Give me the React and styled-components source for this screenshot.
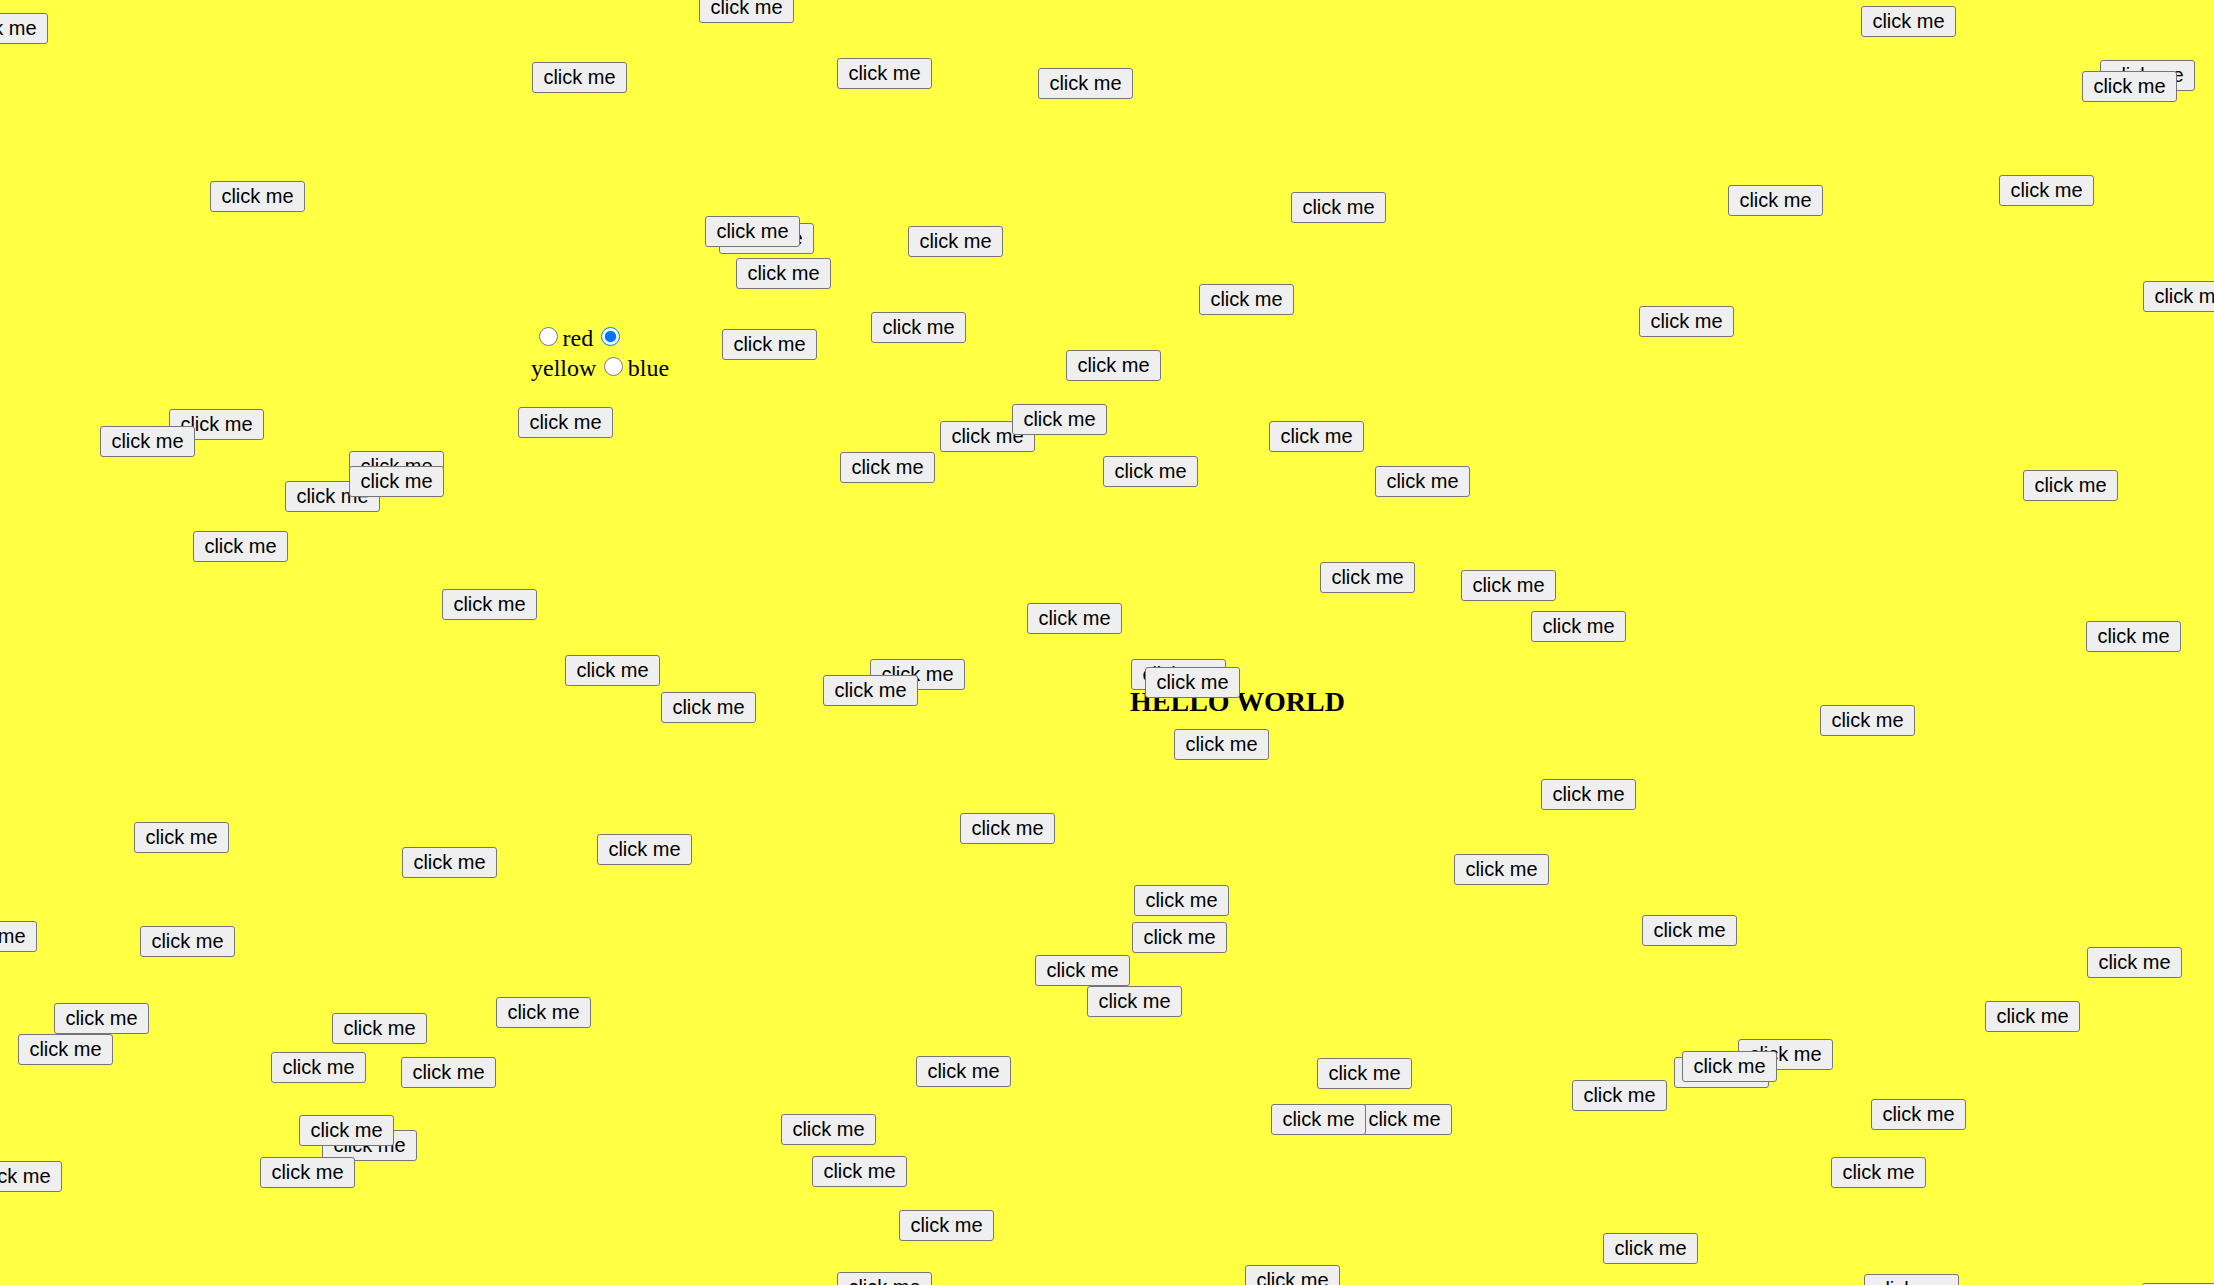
import React from 'react'
import styled, {createGlobalStyle} from 'styled-components'

// where each button landed on the page (left, top)
const spots = [
    [-47, 13], [699, -8], [532, 62], [837, 58], [1038, 68], [1861, 6],
    [2100, 60], [2082, 71], [210, 181], [1999, 175], [1728, 185], [1291, 192],
    [719, 223], [705, 216], [736, 258], [908, 226], [1199, 284], [1639, 306],
    [2143, 281], [871, 312], [722, 329], [1066, 350], [518, 407],
    [169, 409], [100, 426], [349, 451], [285, 481], [349, 466], [193, 531],
    [840, 452], [940, 421], [1012, 404], [1103, 456], [1269, 421], [1375, 466],
    [2023, 470], [442, 589], [1320, 562], [1461, 570], [1531, 611], [1027, 603],
    [2086, 621], [565, 655], [661, 692], [870, 659], [823, 675],
    [1131, 659], [1145, 667], [1174, 729], [1820, 705], [1541, 779],
    [134, 822], [402, 847], [597, 834], [960, 813], [1454, 854],
    [-58, 921], [140, 926], [1134, 885], [1132, 922], [1642, 915],
    [1035, 955], [1087, 986], [2087, 947], [54, 1003], [18, 1034],
    [332, 1013], [496, 997], [1985, 1001], [271, 1052], [401, 1057],
    [916, 1056], [1317, 1058], [1738, 1039], [1674, 1057], [1682, 1051],
    [1572, 1080], [1871, 1099], [1357, 1104], [1271, 1104],
    [322, 1130], [299, 1115], [260, 1157], [781, 1114], [812, 1156],
    [-33, 1161], [1831, 1157], [899, 1210], [1603, 1233], [837, 1272],
    [1245, 1265], [1864, 1274], [2142, 1283],
]

const colors = ['red', 'yellow', 'blue']

const GlobalStyle = createGlobalStyle`
    html, body {
        margin: 0;
        background: #ffff44;
    }
`

const Canvas = styled.div`
    position: relative;
    width: 100vw;
    height: 100vh;
    overflow: hidden;
    background: #ffff44;
    font-family: "Liberation Serif", "Times New Roman", serif;
    color: #000;
`

const Heading = styled.h3`
    position: absolute;
    left: 1130px;
    top: 686px;
    margin: 0;
    font-size: 28px;
    font-weight: bold;
    white-space: nowrap;
`

const ColorPicker = styled.div`
    position: absolute;
    left: 531px;
    top: 322px;
    width: 145px;
    font-size: 24px;
`

const Radio = styled.input`
    width: 19.5px;
    height: 19.5px;
    margin: 4.5px 4.5px 0 7.5px;
    accent-color: #0075ff;
`

const ClickButton = styled.button`
    position: absolute;
    left: ${p => p.$x}px;
    top: ${p => p.$y}px;
    width: 95px;
    height: 31px;
    padding: 0;
    box-sizing: border-box;
    display: flex;
    align-items: center;
    justify-content: center;
    background: #efefef;
    border: 1px solid #767676;
    border-radius: 3px;
    font-family: "Liberation Sans", Arial, sans-serif;
    font-size: 20px;
    color: #000;
    white-space: nowrap;
    cursor: pointer;
`

export default function App() {
    return (
        <Canvas>
            <GlobalStyle />
            <Heading>HELLO WORLD</Heading>
            <ColorPicker>
                {colors.map(c => (
                    <React.Fragment key={c}>
                        <Radio type="radio" name="color" value={c} defaultChecked={c === 'yellow'} />{c}
                    </React.Fragment>
                ))}
            </ColorPicker>
            {spots.map(([x, y], i) => (
                <ClickButton key={i} $x={x} $y={y}>click me</ClickButton>
            ))}
        </Canvas>
    )
}
